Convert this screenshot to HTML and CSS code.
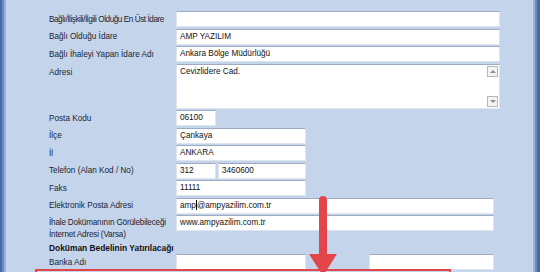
FILE: index.html
```html
<!DOCTYPE html>
<html lang="tr">
<head>
    <meta charset="UTF-8">
    <meta name="viewport" content="width=device-width, initial-scale=1.0">
    <title>İdare Bilgileri</title>
    <link rel="stylesheet" href="styles.css">
</head>
<body>
    <div class="frame">
        <div class="panel">
            <form class="form">
                <div class="row">
                    <label class="tight">Bağlı/İlişkili/İlgili Olduğu En Üst İdare</label>
                    <div class="field w-full"></div>
                </div>
                <div class="row">
                    <label>Bağlı Olduğu İdare</label>
                    <div class="field w-full">AMP YAZILIM</div>
                </div>
                <div class="row">
                    <label>Bağlı İhaleyi Yapan İdare Adı</label>
                    <div class="field w-full">Ankara Bölge Müdürlüğü</div>
                </div>
                <div class="row row-area">
                    <label>Adresi</label>
                    <div class="field area w-full">
                        Cevizlidere Cad.
                        <span class="scroll-btn up"></span>
                        <span class="scroll-btn down"></span>
                    </div>
                </div>
                <div class="row">
                    <label>Posta Kodu</label>
                    <div class="field w-short">06100</div>
                </div>
                <div class="row">
                    <label>İlçe</label>
                    <div class="field w-mid">Çankaya</div>
                </div>
                <div class="row">
                    <label>İl</label>
                    <div class="field w-mid">ANKARA</div>
                </div>
                <div class="row">
                    <label>Telefon (Alan Kod / No)</label>
                    <div class="field w-short">312</div>
                    <div class="field w-tel">3460600</div>
                </div>
                <div class="row">
                    <label>Faks</label>
                    <div class="field w-mid">11111</div>
                </div>
                <div class="row">
                    <label>Elektronik Posta Adresi</label>
                    <div class="field w-wide">amp<span class="caret"></span>@ampyazilim.com.tr</div>
                </div>
                <div class="row row-two">
                    <label class="snug">İhale Dokümanının Görülebileceği<br>İnternet Adresi (Varsa)</label>
                    <div class="field w-wide">www.ampyazilim.com.tr</div>
                </div>
                <div class="section">Doküman Bedelinin Yatırılacağı</div>
                <div class="row">
                    <label>Banka Adı</label>
                    <div class="field w-mid">&nbsp;</div>
                    <div class="field w-bank">&nbsp;</div>
                </div>
            </form>
            <div class="highlight"></div>
            <svg class="arrow" width="34" height="80" viewBox="0 0 34 80">
                <rect x="13" y="0" width="8" height="62" rx="4" fill="#e2464a"/>
                <polygon points="3,58 31,58 17,80" fill="#e2464a"/>
            </svg>
        </div>
    </div>
</body>
</html>
```

FILE: styles.css
```css
body { margin: 0; font-family: Tahoma, "Liberation Sans", Arial, sans-serif; }
.frame { width: 540px; height: 272px; overflow: hidden; background: linear-gradient(90deg, #4a6aa3 0, #4a6aa3 2px, #6a8ac0 2px, #6a8ac0 4px, #95b0da 4px, #95b0da 6px, #c4d5eb 6px, #c4d5eb 533px, #98b2db 533px, #98b2db 535px, #6c8cc2 535px, #6c8cc2 537px, #4a6aa3 537px); }
.panel { position: relative; height: 272px; }
.form { display: flex; flex-direction: column; gap: 1.5px; padding: 11px 0 0 49px; }
.row { display: flex; align-items: center; height: 16px; gap: 2px; }
.row label { width: 125px; font-size: 8.2px; color: #1c2233; white-space: nowrap; }
.row label.tight { letter-spacing: -0.45px; }
.row label.snug { letter-spacing: -0.2px; }
.row-area { height: 45px; align-items: flex-start; }
.row-area label { padding-top: 4px; }
.row-two { height: 27px; align-items: flex-start; }
.row-two label { line-height: 12px; padding-top: 2px; }
.field { height: 16px; box-sizing: border-box; background: #fff; border: 1px solid #dfe5ee; border-top-color: #9eabc2; font-size: 8.2px; line-height: 14px; padding: 0 3px; color: #111; white-space: nowrap; }
.area { position: relative; height: 45px; line-height: 13px; }
.w-full { width: 324px; }
.w-short { width: 40px; }
.w-mid { width: 130px; }
.w-tel { width: 88px; }
.w-wide { width: 318px; }
.w-bank { width: 125px; margin-left: 61px; }
.caret { display: inline-block; width: 1px; height: 10px; background: #000; vertical-align: -2px; }
.scroll-btn { position: absolute; right: 1px; width: 11px; height: 11px; box-sizing: border-box; border: 1px solid #b4b8be; background: #f2f3f5; }
.scroll-btn.up { top: 1px; }
.scroll-btn.down { bottom: 1px; }
.scroll-btn::after { content: ""; position: absolute; left: 2px; border-left: 3px solid transparent; border-right: 3px solid transparent; }
.scroll-btn.up::after { top: 3px; border-bottom: 3px solid #8a8f96; }
.scroll-btn.down::after { top: 3px; border-top: 3px solid #8a8f96; }
.section { height: 9px; line-height: 9px; font-size: 8.4px; font-weight: bold; color: #111; }
.highlight { position: absolute; left: 35px; top: 269px; width: 412px; height: 20px; border: 2px solid #e2464a; }
.arrow { position: absolute; left: 306px; top: 196px; }
```
